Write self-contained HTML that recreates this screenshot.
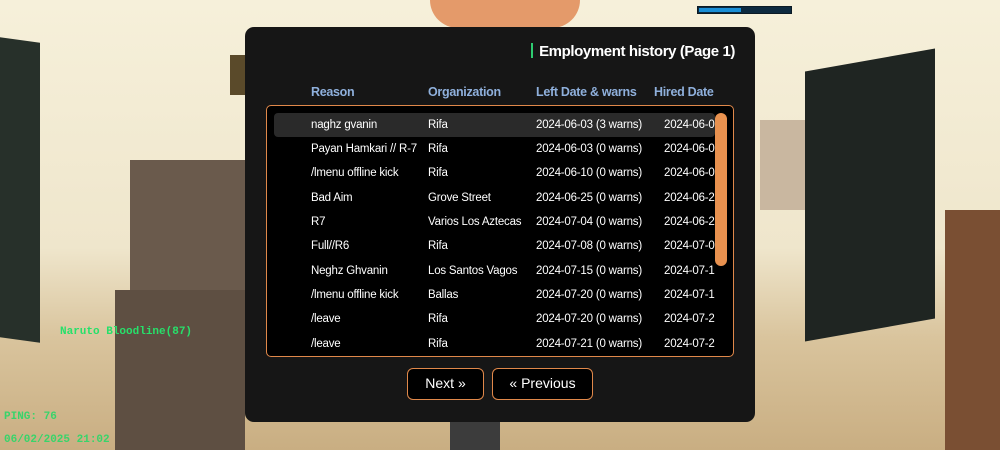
<!DOCTYPE html>
<html><head><meta charset="utf-8"><style>
*{margin:0;padding:0;box-sizing:border-box}
body{width:1000px;height:450px;overflow:hidden;position:relative;background:#efe7cf;font-family:"Liberation Sans",sans-serif}
.a{position:absolute}
.panel{left:245px;top:27px;width:510px;height:395px;background:#161616;border-radius:9px}
.title{right:20px;top:16px;color:#fff;font-size:15px;font-weight:bold;letter-spacing:-0.4px}
.title:before{content:"";display:inline-block;width:2px;height:15px;background:#2ecc71;margin-right:6px;vertical-align:-2px}
.hd{top:58px;color:#8fb0dc;font-size:12.5px;font-weight:bold;letter-spacing:-0.3px}
.box{left:21px;top:78px;width:468px;height:252px;background:#000;border:1.5px solid #e0884a;border-radius:5px;overflow:hidden}
.row{position:absolute;left:0;width:450px;height:24px;color:#fff;font-size:11.5px;line-height:24px;letter-spacing:-0.2px}
.row span{position:absolute;white-space:nowrap}
.hl{background:#2a2a2a;border-radius:4px;left:7px;overflow:hidden}
.sb{left:448px;top:7px;width:12px;height:153px;background:#e8914f;border-radius:6px}
.btn{top:341px;height:32px;border:1.5px solid #e0884a;border-radius:6px;background:#000;color:#fff;font-size:14px;text-align:center;line-height:29px}
</style></head><body>
<div class="a" style="left:0;top:0;width:1000px;height:450px;background:linear-gradient(#f6f0da 0,#efe6cc 55%,#d9c49d 75%,#c9ae82 100%)"></div>
<div class="a" style="left:0;top:40px;width:40px;height:300px;background:#27302a;transform:skewY(8deg)"></div>
<div class="a" style="left:130px;top:160px;width:115px;height:270px;background:#6a5a4c"></div>
<div class="a" style="left:115px;top:290px;width:130px;height:160px;background:#5e4f42"></div>
<div class="a" style="left:230px;top:55px;width:20px;height:40px;background:#5a4a2a"></div>
<div class="a" style="left:760px;top:120px;width:60px;height:90px;background:#c9b7a0"></div>
<div class="a" style="left:805px;top:60px;width:130px;height:270px;background:#1f2522;transform:skewY(-10deg)"></div>
<div class="a" style="left:945px;top:210px;width:55px;height:240px;background:#7a4f33"></div>
<div class="a" style="left:430px;top:0;width:150px;height:28px;background:#e49a6a;border-radius:0 0 40px 40px"></div>
<div class="a" style="left:450px;top:420px;width:50px;height:30px;background:#3c3c3c"></div>
<div class="a" style="left:697px;top:6px;width:95px;height:8px;background:#0d2a3f;border:1px solid #0b1a24"></div>
<div class="a" style="left:699px;top:8px;width:42px;height:4px;background:#1a8fd6"></div>
<div class="a" style="left:60px;top:326px;color:#27e06a;font-size:11px;font-weight:bold;font-family:'Liberation Mono',monospace">Naruto Bloodline(87)</div>
<div class="a" style="left:4px;top:411px;color:#38d46a;font-size:11px;font-weight:bold;font-family:'Liberation Mono',monospace">PING: 76</div>
<div class="a" style="left:4px;top:434px;color:#38d46a;font-size:11px;font-weight:bold;font-family:'Liberation Mono',monospace">06/02/2025 21:02</div>
<div class="a panel">
<div class="a title">Employment history (Page 1)</div>
<div class="a hd" style="left:66px">Reason</div>
<div class="a hd" style="left:183px">Organization</div>
<div class="a hd" style="left:291px">Left Date &amp; warns</div>
<div class="a hd" style="left:409px">Hired Date</div>
<div class="a box">
<div class="row hl" style="top:7px;width:441px"><span style="left:37px">naghz gvanin</span><span style="left:154px">Rifa</span><span style="left:262px">2024-06-03 (3 warns)</span><span style="left:390px">2024-06-0</span></div>
<div class="row" style="top:31px"><span style="left:44px">Payan Hamkari // R-7</span><span style="left:161px">Rifa</span><span style="left:269px">2024-06-03 (0 warns)</span><span style="left:397px">2024-06-0</span></div>
<div class="row" style="top:55px"><span style="left:44px">/lmenu offline kick</span><span style="left:161px">Rifa</span><span style="left:269px">2024-06-10 (0 warns)</span><span style="left:397px">2024-06-0</span></div>
<div class="row" style="top:80px"><span style="left:44px">Bad Aim</span><span style="left:161px">Grove Street</span><span style="left:269px">2024-06-25 (0 warns)</span><span style="left:397px">2024-06-2</span></div>
<div class="row" style="top:104px"><span style="left:44px">R7</span><span style="left:161px">Varios Los Aztecas</span><span style="left:269px">2024-07-04 (0 warns)</span><span style="left:397px">2024-06-2</span></div>
<div class="row" style="top:128px"><span style="left:44px">Full//R6</span><span style="left:161px">Rifa</span><span style="left:269px">2024-07-08 (0 warns)</span><span style="left:397px">2024-07-0</span></div>
<div class="row" style="top:153px"><span style="left:44px">Neghz Ghvanin</span><span style="left:161px">Los Santos Vagos</span><span style="left:269px">2024-07-15 (0 warns)</span><span style="left:397px">2024-07-1</span></div>
<div class="row" style="top:177px"><span style="left:44px">/lmenu offline kick</span><span style="left:161px">Ballas</span><span style="left:269px">2024-07-20 (0 warns)</span><span style="left:397px">2024-07-1</span></div>
<div class="row" style="top:201px"><span style="left:44px">/leave</span><span style="left:161px">Rifa</span><span style="left:269px">2024-07-20 (0 warns)</span><span style="left:397px">2024-07-2</span></div>
<div class="row" style="top:226px"><span style="left:44px">/leave</span><span style="left:161px">Rifa</span><span style="left:269px">2024-07-21 (0 warns)</span><span style="left:397px">2024-07-2</span></div>
<div class="a sb"></div>
</div>
<div class="a btn" style="left:162px;width:77px">Next »</div>
<div class="a btn" style="left:247px;width:101px">« Previous</div>
</div>
</body></html>
